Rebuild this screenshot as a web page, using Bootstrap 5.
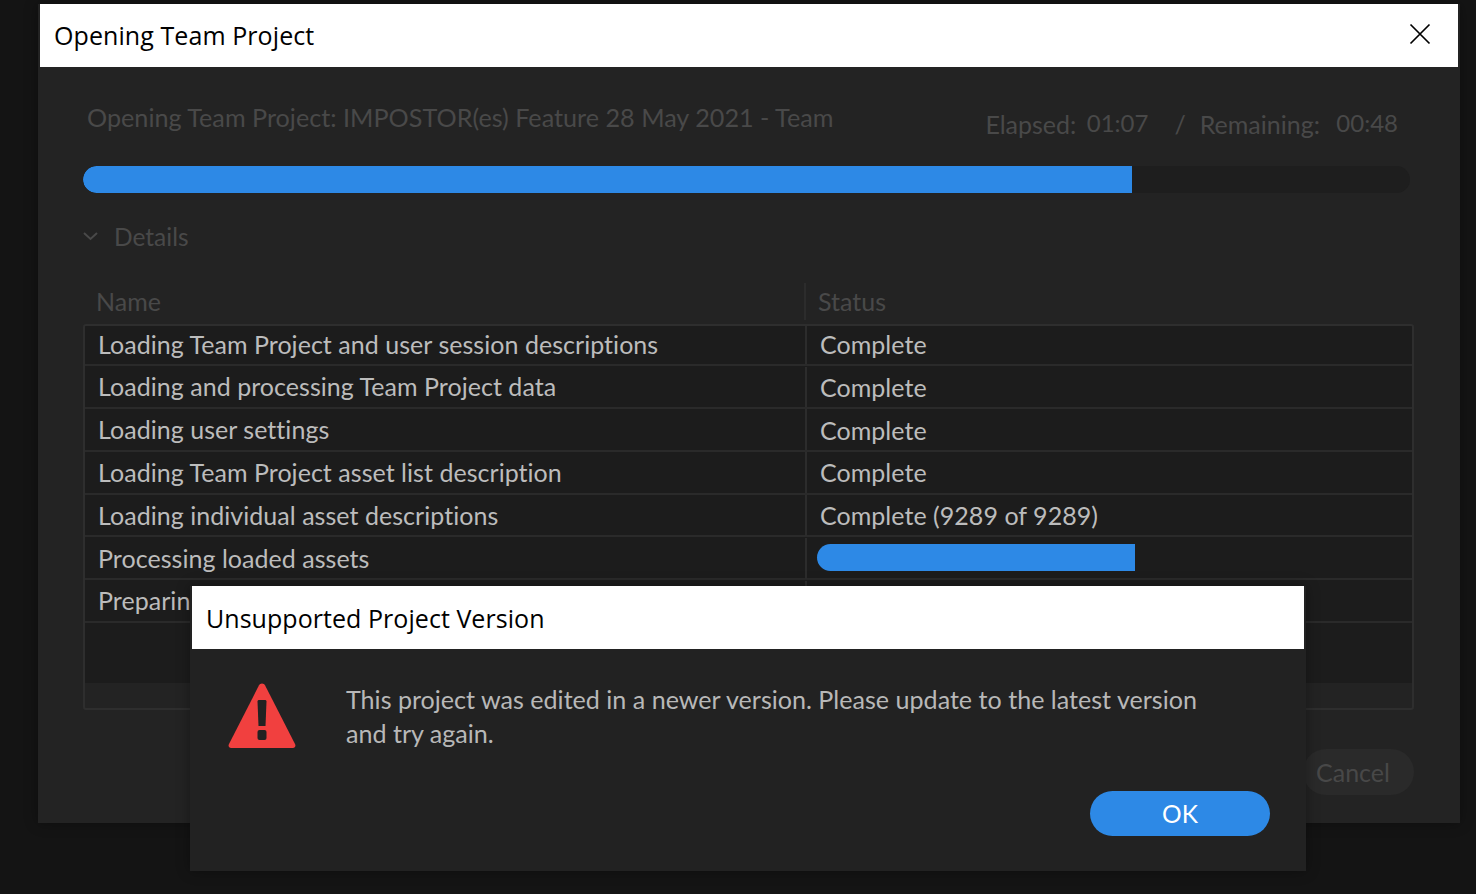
<!DOCTYPE html>
<html lang="en">
<head>
<meta charset="utf-8">
<title>Unsupported Project Version</title>
<link href="https://cdn.jsdelivr.net/npm/bootstrap@5.3.0/dist/css/bootstrap.min.css" rel="stylesheet">
<style>
html,body{height:100%}
body{background:#141414;overflow:hidden;position:relative;font-family:"Lato","Noto Sans",sans-serif;font-variant-ligatures:none;color:#bcbcbc}
.app-win{position:absolute;background:#232323;box-shadow:0 0 12px rgba(0,0,0,.35)}
.win-main{left:38px;top:4px;width:1422px;height:819px;padding:0 2px}
.win-alert{left:190px;top:586px;width:1116px;height:285px;padding:0 2px;background:#222}
.title-bar{background:#fff;color:#000;font-family:"Open Sans",sans-serif;font-size:25px;letter-spacing:.08px;height:63px;padding-left:14px;padding-top:1px}
.title-alert{padding-left:14px;letter-spacing:.05px;padding-top:2px}
.close-x{margin-right:27px;margin-top:-4px}
.win-body{padding:0 43px}
.top-line{height:99px;padding-top:32px;color:#494949;font-size:25.2px;width:1327px}
.prog-title{padding-left:4px}
.time-line{padding-right:12px;margin-top:7px;font-size:25px}
.time-line .num{position:relative;top:-2px;font-size:24px}
.num-last{margin-left:10px}
.sep-mark{margin:0 14px 0 26px}
.main-prog{height:27px;width:1327px;background:#1e1e1e;border-radius:14px}
.main-prog .progress-bar,.row-prog{background:#2d89e6;border-radius:14px 0 0 14px}
.details-line{height:44px;margin-top:22px;color:#494949;font-size:24.5px;gap:16px}
.details-line svg{margin-top:-3px}
.col-heads{height:43px;margin-top:21px;color:#494949;font-size:25px}
.head-a{width:723px;padding-left:13px;border-right:2px solid #2c2c2c}
.head-b{padding-left:12px}
.task-table{width:1331px;height:386px;border:2px solid #2e2e2e;border-radius:3px;overflow:hidden;margin-top:1px}
.task-fill{background:#1c1c1c}
.task-row{height:42.85px;border-bottom:2px solid #2a2a2a;font-size:25px;letter-spacing:.04px;padding-top:2px}
.task-row:first-child{height:40px;padding-top:0}
.cell-a{width:722px;padding-left:13px;border-right:2px solid #2c2c2c;height:calc(100% + 2px);margin-top:-1px;white-space:nowrap}
.task-row:first-child .cell-a{height:100%;margin-top:0}
.cell-b{padding-left:13px}
.task-empty{height:60px}
.row-prog{width:318px;height:27px;margin:-2px 0 0 -3px}
.cancel-btn{position:absolute;left:1265px;top:745px;width:111px;height:46px;border-radius:23px;background:#2a2a2a;color:#484848;font-size:25px;padding:2px 0 0;text-align:left;text-indent:13px;border:0}
.alert-body{padding:0 0 0 36px;height:130px}
.alert-text{box-sizing:content-box;font-size:25.1px;line-height:34px;width:865px;padding-left:50px;padding-top:33px;color:#b8b8b8}
.warn-icon{flex:none;margin-top:33px}
.ok-btn{background:#2d89e6;color:#fff;width:180px;height:45px;border-radius:23px;border:0;font-size:24.5px;padding:2px 0 0;position:absolute;left:900px;top:205px}
</style>
</head>
<body>
<div class="app-win win-main">
  <div class="title-bar d-flex align-items-center justify-content-between">
    <span>Opening Team Project</span>
    <svg class="close-x" width="22" height="22" viewBox="0 0 22 22" aria-label="Close"><path d="M1.5 1.5 20.5 20.5M20.5 1.5 1.5 20.5" stroke="#000" stroke-width="1.7" fill="none"/></svg>
  </div>
  <div class="win-body">
    <div class="top-line d-flex justify-content-between">
      <span class="prog-title">Opening Team Project: IMPOSTOR(es) Feature 28 May 2021 - Team</span>
      <span class="time-line">Elapsed: <span class="num ms-1">01:07</span><span class="sep-mark">/</span>Remaining: <span class="num num-last">00:48</span></span>
    </div>
    <div class="progress main-prog"><div class="progress-bar" style="width:79.05%"></div></div>
    <div class="details-line d-flex align-items-center">
      <svg width="15" height="10" viewBox="0 0 15 10"><path d="M1 2 7.5 8 14 2" stroke="#494949" stroke-width="2" fill="none"/></svg>
      <span>Details</span>
    </div>
    <div class="col-heads d-flex align-items-center"><div class="head-a">Name</div><div class="head-b">Status</div></div>
    <div class="task-table">
      <div class="task-fill">
        <div class="task-row d-flex align-items-center"><div class="cell-a d-flex align-items-center">Loading Team Project and user session descriptions</div><div class="cell-b">Complete</div></div>
        <div class="task-row d-flex align-items-center"><div class="cell-a d-flex align-items-center">Loading and processing Team Project data</div><div class="cell-b">Complete</div></div>
        <div class="task-row d-flex align-items-center"><div class="cell-a d-flex align-items-center">Loading user settings</div><div class="cell-b">Complete</div></div>
        <div class="task-row d-flex align-items-center"><div class="cell-a d-flex align-items-center">Loading Team Project asset list description</div><div class="cell-b">Complete</div></div>
        <div class="task-row d-flex align-items-center"><div class="cell-a d-flex align-items-center">Loading individual asset descriptions</div><div class="cell-b">Complete (9289 of 9289)</div></div>
        <div class="task-row d-flex align-items-center"><div class="cell-a d-flex align-items-center">Processing loaded assets</div><div class="cell-b"><div class="row-prog"></div></div></div>
        <div class="task-row d-flex align-items-center"><div class="cell-a d-flex align-items-center">Preparing</div><div class="cell-b"></div></div>
        <div class="task-empty"></div>
      </div>
    </div>
  </div>
  <button class="cancel-btn" type="button">Cancel</button>
</div>

<div class="app-win win-alert">
  <div class="title-bar title-alert d-flex align-items-center">Unsupported Project Version</div>
  <div class="alert-body d-flex">
    <svg class="warn-icon" width="68" height="68" viewBox="0 0 68 68"><path d="M34 1.500c1.300 0 2.400.7 3 1.800l30 58.600c1 2 .1 4.100-2.200 4.100H3.200c-2.300 0-3.200-2.100-2.200-4.100L31 3.300c.6-1.100 1.700-1.800 3-1.800Z" fill="#f1403f"/><path d="M29.500 19.500c0-1 .7-1.500 1.500-1.500h6c.8 0 1.500.5 1.500 1.500L37.500 44h-7Z" fill="#222"/><rect x="29.500" y="48" width="9" height="10" rx="2" fill="#222"/></svg>
    <div class="alert-text">This project was edited in a newer version. Please update to the latest version and try again.</div>
  </div>
  <button class="ok-btn" type="button">OK</button>
</div>
<script src="https://cdn.jsdelivr.net/npm/bootstrap@5.3.0/dist/js/bootstrap.bundle.min.js"></script>
</body>
</html>
